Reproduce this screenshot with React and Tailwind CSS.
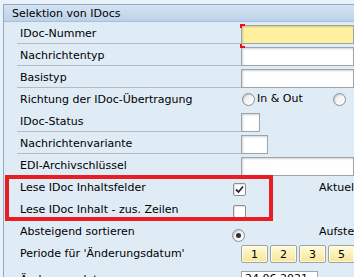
import React from 'react';

function Input({ w, yellow }) {
  return (
    <div
      className={`h-[19px] border border-[#9ca4ac] shadow-[inset_1px_1px_2px_rgba(0,0,0,0.18)] ${yellow ? 'bg-[#fff0a0]' : 'bg-white'} ${w}`}
    ></div>
  );
}

function Radio({ on }) {
  return (
    <div className="w-[13px] h-[13px] rounded-full border border-[#8b8f94] bg-gradient-to-br from-[#e9e9e9] to-white shadow-[inset_1px_1px_1px_rgba(0,0,0,0.15)] flex items-center justify-center shrink-0">
      {on && <div className="w-[5px] h-[5px] rounded-full bg-[#2f3033]"></div>}
    </div>
  );
}

function Checkbox({ on }) {
  return (
    <div className="w-[13px] h-[13px] rounded-[2px] border border-[#8b8f94] bg-white shadow-[inset_1px_1px_1px_rgba(0,0,0,0.12)] flex items-center justify-center shrink-0">
      {on && (
        <svg width="9" height="9" viewBox="0 0 9 9">
          <path d="M1 4.5 L3.5 7 L8 1.5" fill="none" stroke="#25253f" strokeWidth="1.8" />
        </svg>
      )}
    </div>
  );
}

function Row({ label, line, children, h = 'h-[22px]' }) {
  return (
    <div className={`flex ${h}`}>
      <div className={`w-[224px] shrink-0 pl-[3px] pt-[5px] leading-[13px] whitespace-nowrap overflow-hidden ${line ? 'border-b border-[#b5babf]' : ''}`}>
        {label}
      </div>
      <div className="flex-1 flex items-end">{children}</div>
    </div>
  );
}

function CheckRow({ label, on, right }) {
  return (
    <div className="flex h-[22px]">
      <div className="w-[216px] shrink-0 pl-[3px] pt-[5px] leading-[13px] whitespace-nowrap">{label}</div>
      <div className="pt-[7px]">
        <Checkbox on={on} />
      </div>
      {right && <div className="pl-[73px] pt-[5px] leading-[13px] whitespace-nowrap">{right}</div>}
    </div>
  );
}

function PeriodButton({ n }) {
  return (
    <div className="w-[27px] h-[18px] mr-[2px] rounded-[2px] border border-[#a3a3a3] bg-gradient-to-b from-[#fffbd8] to-[#f7e594] shadow-[inset_0_0_0_1px_rgba(255,255,255,0.7)] flex items-center justify-center leading-none shrink-0">
      {n}
    </div>
  );
}

export default function App() {
  return (
    <div className="relative w-[354px] h-[277px] overflow-hidden bg-[#e8f0f8] text-[11px] text-black font-['DejaVu_Sans',Verdana,sans-serif]">
      <div className="ml-[3px] mt-[4px] h-[300px] border-l border-t border-[#92a9c6] bg-[#dfebf5]">
        <div className="h-[17px] pl-[8px] leading-[17px] bg-gradient-to-b from-[#d5e3f2] to-[#bcd1e9] border-b border-[#a7bfdb]">
          Selektion von IDocs
        </div>
        <div className="pl-[13px]">
          <Row label="IDoc-Nummer" line>
            <Input w="flex-1" yellow />
          </Row>
          <Row label="Nachrichtentyp" line>
            <Input w="flex-1" />
          </Row>
          <Row label="Basistyp" line>
            <Input w="flex-1" />
          </Row>
          <Row label="Richtung der IDoc-Übertragung">
            <div className="flex items-center h-[22px] pl-[1px]">
              <Radio />
              <span className="pl-[2px] w-[78px]">In &amp; Out</span>
              <Radio />
            </div>
          </Row>
          <Row label="IDoc-Status" line>
            <Input w="w-[19px]" />
          </Row>
          <Row label="Nachrichtenvariante" line>
            <Input w="w-[27px]" />
          </Row>
          <Row label="EDI-Archivschlüssel" line>
            <Input w="flex-1" />
          </Row>
          <CheckRow label="Lese IDoc Inhaltsfelder" on right="Aktuelle" />
          <CheckRow label="Lese IDoc Inhalt - zus. Zeilen" />
          <div className="flex h-[22px]">
            <div className="w-[215px] shrink-0 pl-[3px] pt-[5px] leading-[13px] whitespace-nowrap">Absteigend sortieren</div>
            <div className="pt-[9px]">
              <Radio on />
            </div>
            <div className="pl-[74px] pt-[5px] leading-[13px] whitespace-nowrap">Aufsteigend</div>
          </div>
          <Row label="Periode für 'Änderungsdatum'" h="h-[26px]">
            <div className="flex h-full pt-[3px]">
              <PeriodButton n="1" />
              <PeriodButton n="2" />
              <PeriodButton n="3" />
              <PeriodButton n="5" />
              <PeriodButton n="7" />
            </div>
          </Row>
          <Row label="Änderungsdatum" line>
            <div className="w-[77px] h-[19px] border border-[#9ca4ac] bg-white px-[3px] pt-[1px] leading-[12px]">24.06.2021</div>
          </Row>
        </div>
      </div>

      {/* focus brackets on first input */}
      <div className="absolute left-[240px] top-[24px] w-[5px] h-[4px] border-l-2 border-t-2 border-[#e8101c]"></div>
      <div className="absolute left-[240px] top-[44px] w-[5px] h-[4px] border-l-2 border-b-2 border-[#e8101c]"></div>

      {/* red annotation box */}
      <div className="absolute left-[5px] top-[175px] w-[268px] h-[46px] border-4 border-[#ea1c24]"></div>
    </div>
  );
}
